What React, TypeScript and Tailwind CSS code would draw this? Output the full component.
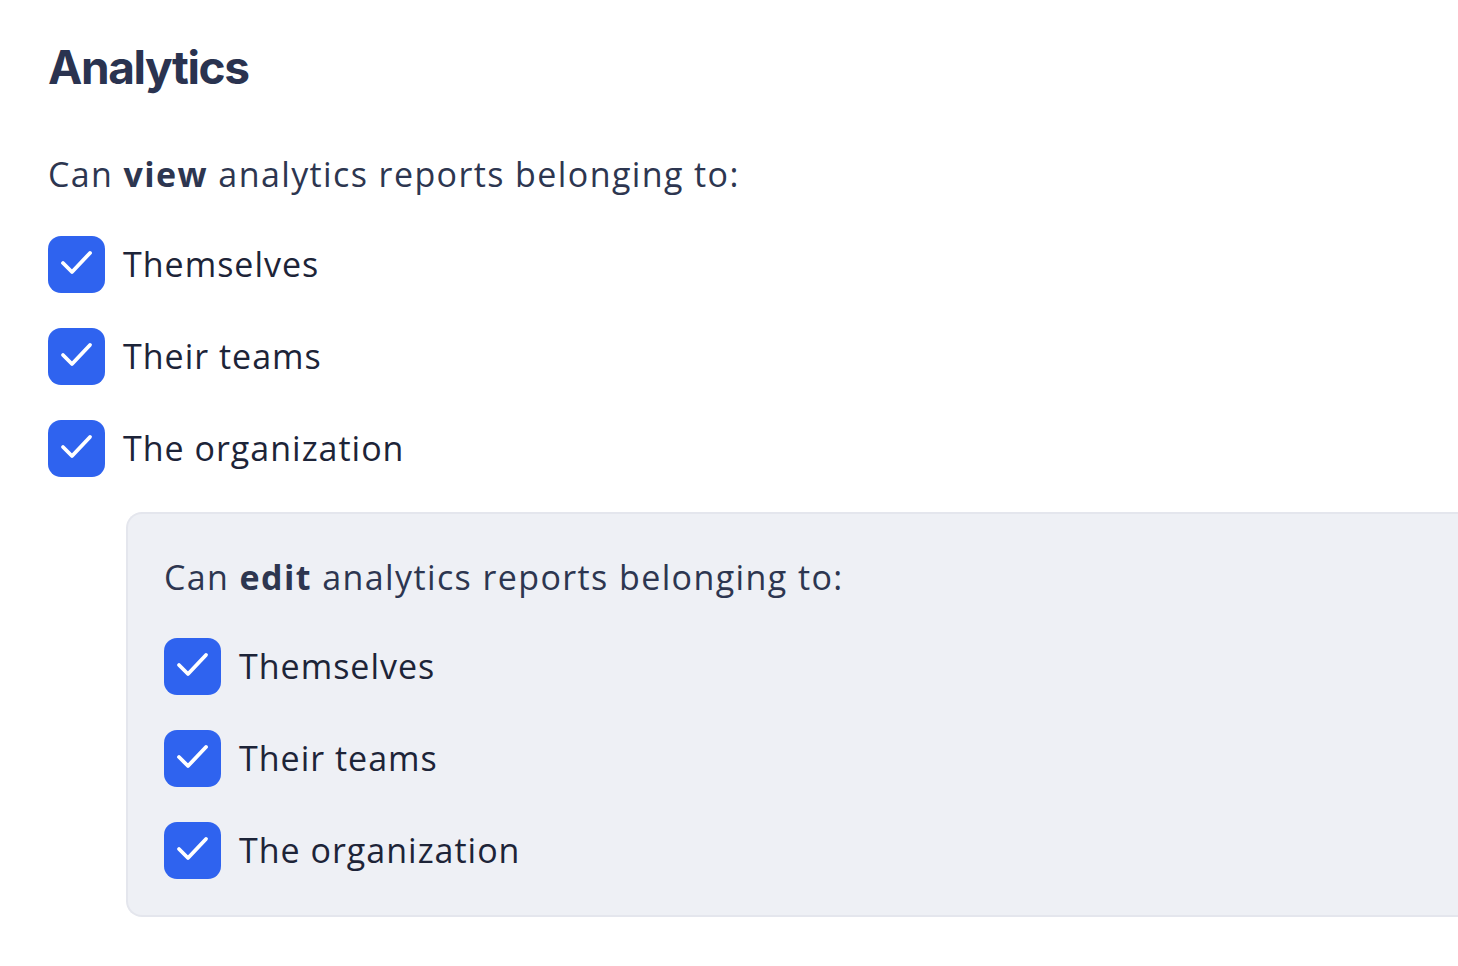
function CheckIcon() {
  return (
    <svg viewBox="0 0 57 57" className="h-[57px] w-[57px]" fill="none" stroke="white" strokeWidth={3.8} strokeLinecap="round" strokeLinejoin="round">
      <path d="M15 27l9 9 18-19" />
    </svg>
  );
}

function CheckRow({ label }: { label: string }) {
  return (
    <label className="flex h-[57px] items-center gap-[18px]">
      <span className="flex h-[57px] w-[57px] shrink-0 items-center justify-center rounded-[13px] bg-[#2f63ef]">
        <CheckIcon />
      </span>
      <span className="text-[34px] tracking-[1px] text-[#1d2438]">{label}</span>
    </label>
  );
}

const options = ["Themselves", "Their teams", "The organization"];

export default function App() {
  return (
    <div className="min-h-screen bg-white pl-[48px] pt-[38px] font-['Open_Sans',sans-serif]">
      <h1 className="font-['Inter',sans-serif] text-[46px] font-bold leading-[58px] tracking-[-1.4px] text-[#2a3350]">Analytics</h1>

      <p className="mt-[56px] text-[34px] leading-[44px] tracking-[1.4px] text-[#2d3650]">
        Can <strong className="font-bold">view</strong> analytics reports belonging to:
      </p>

      <div className="mt-[40px] flex flex-col gap-[35px]">
        {options.map((o) => (
          <CheckRow key={o} label={o} />
        ))}
      </div>

      <div className="ml-[78px] mt-[35px] rounded-l-[16px] border-2 border-r-0 border-[#e4e6ed] bg-[#eef0f5] pb-[36px] pl-[36px] pt-[38px]">
        <p className="text-[34px] leading-[50px] tracking-[1.4px] text-[#2d3650]">
          Can <strong className="font-bold">edit</strong> analytics reports belonging to:
        </p>
        <div className="mt-[36px] flex flex-col gap-[35px]">
          {options.map((o) => (
            <CheckRow key={o} label={o} />
          ))}
        </div>
      </div>
    </div>
  );
}
